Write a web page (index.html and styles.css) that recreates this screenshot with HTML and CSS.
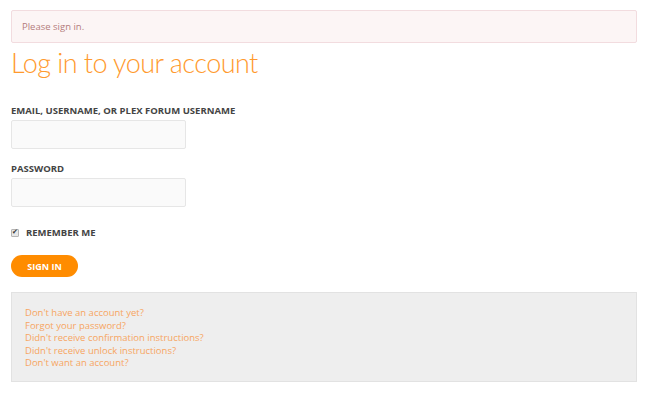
FILE: index.html
```html
<!DOCTYPE html>
<html lang="en">
<head>
    <meta charset="UTF-8">
    <title>Log in to your account</title>
    <link rel="stylesheet" href="styles.css">
</head>
<body>
    <main class="page">
        <div class="alert">Please sign in.</div>
        <h1 class="title">Log in to your account</h1>
        <form class="login-form">
            <div class="field">
                <label for="login">Email, username, or Plex forum username</label>
                <input type="text" id="login" class="text-input">
            </div>
            <div class="field">
                <label for="password">Password</label>
                <input type="password" id="password" class="text-input">
            </div>
            <div class="remember">
                <input type="checkbox" id="remember" checked>
                <label for="remember">Remember me</label>
            </div>
            <button type="submit" class="btn-signin">Sign in</button>
        </form>
        <div class="links">
            <a href="#">Don't have an account yet?</a>
            <a href="#">Forgot your password?</a>
            <a href="#">Didn't receive confirmation instructions?</a>
            <a href="#">Didn't receive unlock instructions?</a>
            <a href="#">Don't want an account?</a>
        </div>
    </main>
</body>
</html>
```

FILE: styles.css
```css
body {
    margin: 0;
    font-family: "Open Sans", "Liberation Sans", sans-serif;
    background-color: #fff;
    color: #444;
}

.page {
    padding: 10px 11px;
}

.alert {
    height: 31px;
    line-height: 31px;
    padding: 0 10px;
    background-color: #fcf5f5;
    border: 1px solid #f2dcdf;
    border-radius: 2px;
    color: #b47c7c;
    font-size: 9.5px;
}

.title {
    margin: 3px 0 0;
    font-family: Lato, "Open Sans", sans-serif;
    font-size: 27px;
    font-weight: 300;
    letter-spacing: -0.55px;
    line-height: 34px;
    color: #ff9a2e;
}

.login-form {
    margin-top: 24px;
}

.field {
    margin-bottom: 13px;
}

.field label,
.remember label {
    display: block;
    font-size: 9.5px;
    font-weight: 700;
    text-transform: uppercase;
    color: #444;
    line-height: 14px;
    margin-bottom: 2px;
}

.text-input {
    display: block;
    box-sizing: border-box;
    width: 175px;
    height: 29px;
    background-color: #fafafa;
    border: 1px solid #e6e6e6;
    border-radius: 2px;
}

.remember {
    display: flex;
    align-items: center;
    margin-top: 19px;
}

.remember input {
    appearance: none;
    -webkit-appearance: none;
    position: relative;
    box-sizing: border-box;
    margin: 0 7px 0 0;
    width: 8px;
    height: 8px;
    background-color: #e8e8e8;
    border: 1px solid #b5b5b5;
    border-radius: 1px;
}

.remember input:checked::after {
    content: "\2714";
    position: absolute;
    left: 0;
    top: -3px;
    font-size: 7px;
    line-height: 10px;
    color: #333;
}

.remember label {
    margin: 0;
}

.btn-signin {
    display: block;
    margin-top: 15px;
    width: 67px;
    height: 22px;
    border: none;
    border-radius: 11px;
    background-color: #ff8c00;
    color: #fff;
    font-family: inherit;
    font-size: 9px;
    font-weight: 700;
    text-transform: uppercase;
    cursor: pointer;
}

.links {
    margin-top: 15px;
    padding: 14px 13px 13px;
    height: 61px;
    background-color: #eeeeee;
    border: 1px solid #e2e2e2;
    display: flex;
    flex-direction: column;
}

.links a {
    font-size: 9.5px;
    line-height: 12.5px;
    color: #f7a561;
    text-decoration: none;
}
```
